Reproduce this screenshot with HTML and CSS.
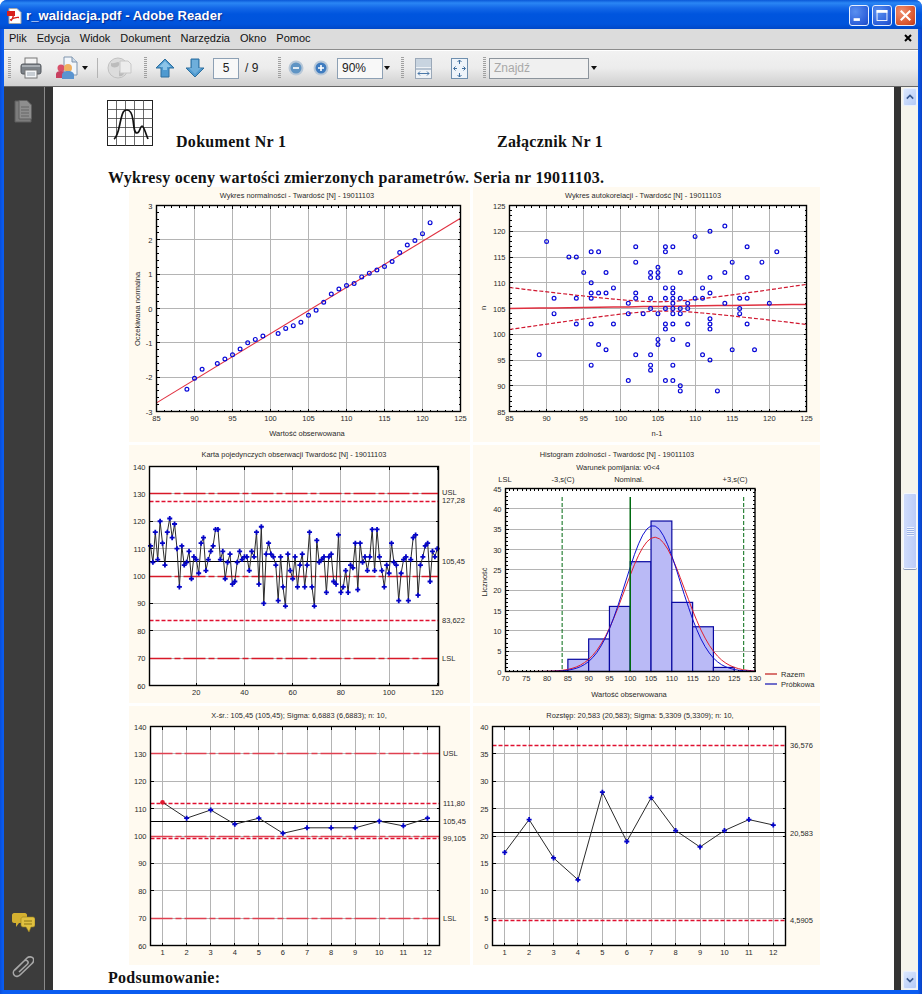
FILE: index.html
```html
<!DOCTYPE html>
<html lang="pl">
<head>
    <meta charset="UTF-8">
    <title>r_walidacja.pdf - Adobe Reader</title>
    <link rel="stylesheet" href="styles.css">
</head>
<body>
    <div class="window">
        <div class="titlebar">
            <svg class="title-icon" viewBox="0 0 15 16">
                <path d="M2 0.500h8l4 4v11H2z" fill="#fff" stroke="#a8a8a8"/>
                <path d="M0 3h8v5H0z" fill="#d8201c"/>
                <path d="M4 13c2-3 3-7 2.500-10M3 12c3-2 6-3 9-2.500" fill="none" stroke="#d8201c" stroke-width="1.300"/>
            </svg>
            <div class="title-text">r_walidacja.pdf - Adobe Reader</div>
            <div class="win-buttons">
                <div class="win-btn">
                    <svg viewBox="0 0 20 20"><rect x="4" y="13" width="7" height="3" fill="#fff"/></svg>
                </div>
                <div class="win-btn">
                    <svg viewBox="0 0 20 20"><rect x="4.500" y="4.500" width="11" height="11" fill="none" stroke="#fff"/><rect x="4" y="4" width="12" height="3" fill="#fff"/></svg>
                </div>
                <div class="win-btn win-close">
                    <svg viewBox="0 0 20 20"><path d="M5 5l10 10M15 5L5 15" stroke="#fff" stroke-width="2.200"/></svg>
                </div>
            </div>
        </div>

        <div class="inner">
            <div class="menubar">
                <span>Plik</span>
                <span>Edycja</span>
                <span>Widok</span>
                <span>Dokument</span>
                <span>Narzędzia</span>
                <span>Okno</span>
                <span>Pomoc</span>
                <svg class="menu-close" viewBox="0 0 8 8"><path d="M1 1l6 6M7 1L1 7" stroke="#000" stroke-width="2"/></svg>
            </div>

            <div class="toolbar">
                <div class="grip grip-first"></div>
                <svg class="ico ico-print" viewBox="0 0 22 22">
                    <rect x="5" y="1" width="12" height="7" fill="#f4f4f4" stroke="#777"/>
                    <rect x="1" y="7" width="20" height="10" rx="2" fill="#7c8288" stroke="#55595e"/>
                    <rect x="2" y="8" width="18" height="2" fill="#a8adb2"/>
                    <rect x="5" y="13" width="12" height="8" fill="#f4f6f8" stroke="#777"/>
                    <path d="M7 16h8M7 18h8" stroke="#9aa4ae"/>
                </svg>
                <svg class="ico ico-collab" viewBox="0 0 23 24">
                    <path d="M9 1h8l5 5v13H9z" fill="#f2f6fa" stroke="#7f94ad"/>
                    <path d="M17 1v5h5" fill="#cfdcea" stroke="#7f94ad"/>
                    <circle cx="6" cy="12" r="3.500" fill="#d8506a"/>
                    <path d="M1 22v-4c0-2 2-3 5-3s5 1 5 3v4z" fill="#c84060"/>
                    <circle cx="13" cy="12" r="4" fill="#f0b060"/>
                    <path d="M7 23v-4c0-2 2-4 6-4s6 2 6 4v4z" fill="#5a94d0"/>
                </svg>
                <div class="drop drop-collab"></div>
                <div class="tb-sep"></div>
                <svg class="ico ico-globe" viewBox="0 0 25 22">
                    <circle cx="11" cy="11" r="10" fill="#dcdcdc" stroke="#c0c0c0"/>
                    <path d="M4 6c3 1 5-1 7-1s2 4-1 5-5 0-6-1zM12 14c2-1 5 0 5 2s-3 4-5 3z" fill="#bcbcbc"/>
                    <path d="M13 4h8l3 3v9H13z" fill="#ececec" stroke="#c8c8c8"/>
                </svg>
                <div class="grip grip-nav"></div>
                <svg class="ico ico-up" viewBox="0 0 20 20">
                    <path d="M10 1l9 9h-5v9H6v-9H1z" fill="#4f9ad0" stroke="#2e6f9e"/>
                    <path d="M10 3l6 6h-4v3H8V9H4z" fill="#8cc4e8"/>
                </svg>
                <svg class="ico ico-down" viewBox="0 0 20 20">
                    <path d="M10 19l9-9h-5V1H6v9H1z" fill="#4f9ad0" stroke="#2e6f9e"/>
                    <path d="M7 2h6v8h3l-6 6-6-6h3z" fill="#6eaedb"/>
                </svg>
                <div class="tb-input page-input">5</div>
                <div class="page-total">/ 9</div>
                <div class="grip grip-zoom"></div>
                <svg class="ico ico-minus" viewBox="0 0 16 16">
                    <circle cx="8" cy="8" r="7.500" fill="#b8c8d8"/>
                    <circle cx="8" cy="8" r="5.500" fill="#5f94c4"/>
                    <path d="M5 8h6" stroke="#fff" stroke-width="1.600"/>
                </svg>
                <svg class="ico ico-plus" viewBox="0 0 16 16">
                    <circle cx="8" cy="8" r="7.500" fill="#b8c8d8"/>
                    <circle cx="8" cy="8" r="5.500" fill="#3f7cc0"/>
                    <path d="M5 8h6M8 5v6" stroke="#fff" stroke-width="1.600"/>
                </svg>
                <div class="tb-input zoom-input">90%</div>
                <div class="drop drop-zoom"></div>
                <div class="grip grip-fit"></div>
                <svg class="ico ico-fitw" viewBox="0 0 17 21">
                    <rect x="0.500" y="0.500" width="16" height="20" fill="#eef2f6" stroke="#9aa8b8"/>
                    <rect x="1" y="1" width="15" height="8" fill="#c8d4e0"/>
                    <path d="M1 11h15" stroke="#7f94ad"/>
                    <path d="M3 15.500h11M3 15.500l2-2M3 15.500l2 2M14 15.500l-2-2M14 15.500l-2 2" fill="none" stroke="#4a78a8"/>
                </svg>
                <svg class="ico ico-fitp" viewBox="0 0 17 21">
                    <rect x="0.500" y="0.500" width="16" height="20" fill="#eef4fa" stroke="#6f8fae"/>
                    <path d="M8.500 2v4M6.500 4l2-2 2 2M8.500 19v-4M6.500 17l2 2 2-2M3 10.500h3M4.500 8.500l-2 2 2 2M14 10.500h-3M12.500 8.500l2 2-2 2" fill="none" stroke="#3f6f9f"/>
                </svg>
                <div class="grip grip-find"></div>
                <div class="tb-input find-input">Znajdź</div>
                <div class="drop drop-find"></div>
            </div>

            <div class="workspace">
                <div class="navpanel">
                    <svg class="nav-pages" viewBox="0 0 18 23">
                        <path d="M1 1h11l5 5v16H1z" fill="#7c7c7c" stroke="#5c5c5c"/>
                        <path d="M5 0.500h8l4.500 4.500v14H5z" fill="#8e8e8e" stroke="#606060"/>
                        <path d="M7 7h8M7 10h8M7 13h8M7 16h8" stroke="#666"/>
                    </svg>
                    <div class="nav-bottom">
                        <svg class="nav-comments" viewBox="0 0 23 21">
                            <path d="M2 1h11c1 0 2 1 2 2v6c0 1-1 2-2 2H7l-3 4v-4H2c-1 0-2-1-2-2V3c0-1 1-2 2-2z" fill="#d4b030"/>
                            <path d="M11 5h10c1 0 2 1 2 2v6c0 1-1 2-2 2h-2l-2 5-3-5h-3c-1 0-2-1-2-2V7c0-1 1-2 2-2z" fill="#e0c040" stroke="#98801c" stroke-width="0.600"/>
                            <path d="M12 9h8M12 12h8" stroke="#8a7414"/>
                        </svg>
                        <svg class="nav-clip" viewBox="0 0 22 23">
                            <path d="M3 15L15 3c2-2 5-1 6 0s1 4-1 5.500L8 20c-1.500 1.500-4 2-5.500 .5S1 16.500 2.500 15L12 6c1-1 2.500-1 3.500 0s.5 2.500-.5 3.500L7 17" fill="none" stroke="#a8a8a8" stroke-width="1.600"/>
                        </svg>
                    </div>
                </div>
                <div class="canvas">
                    <div class="page">
                        <div class="doc-head">
                            <svg class="doc-logo" viewBox="0 0 46 46">
                                <rect x="0.500" y="0.500" width="45" height="45" fill="#fff" stroke="#222"/>
                                <path d="M9.500 0v46M18.500 0v46M27.500 0v46M36.500 0v46M0 9.500h46M0 18.500h46M0 27.500h46M0 36.500h46" stroke="#444" stroke-width="0.800"/>
                                <path d="M7 39c4-2 5-12 7-20s3-9 6-9 5 3 6 10 1 13 4 13 3-7 5-7 3 6 6 13" fill="none" stroke="#111" stroke-width="1.700"/>
                            </svg>
                            <div class="doc-no">Dokument Nr 1</div>
                            <div class="doc-no doc-att">Załącznik Nr 1</div>
                        </div>
                        <h2 class="doc-title">Wykresy oceny wartości zmierzonych parametrów. Seria nr 19011103.</h2>
                        <div class="charts">
                            <svg class="chart" id="normal" viewBox="130 188 341 255"></svg>
                            <svg class="chart" id="autocorr" viewBox="474 188 347 255"></svg>
                            <svg class="chart" id="single" viewBox="130 446 341 258"></svg>
                            <svg class="chart" id="histogram" viewBox="473 446 347 258"></svg>
                            <svg class="chart" id="xbar" viewBox="129 707 341 259"></svg>
                            <svg class="chart" id="range" viewBox="473 707 347 259"></svg>
                        </div>
                        <h3 class="doc-summary">Podsumowanie:</h3>
                    </div>
                </div>
                <div class="scrollbar">
                    <div class="sb-btn">
                        <svg viewBox="0 0 15 15"><path d="M3.500 9.500l4-4 4 4" fill="none" stroke="#3a5a90" stroke-width="2"/></svg>
                    </div>
                    <div class="sb-track">
                        <div class="sb-thumb">
                            <div class="sb-lines"></div>
                        </div>
                    </div>
                    <div class="sb-btn">
                        <svg viewBox="0 0 15 15"><path d="M3.500 5.500l4 4 4-4" fill="none" stroke="#3a5a90" stroke-width="2"/></svg>
                    </div>
                </div>
            </div>
        </div>
    </div>

    <script src="charts.js"></script>
</body>
</html>
```

FILE: styles.css
```css
html, body {
    margin: 0;
    padding: 0;
    background: #fff;
}

.window {
    width: 922px;
    height: 994px;
    display: flex;
    flex-direction: column;
    overflow: hidden;
    background: linear-gradient(90deg, #0a4ed8 0, #0a5cf0 3px, #0a5cf0 918px, #0840c4 922px);
    border-radius: 7px 7px 0 0;
    font-family: "Liberation Sans", Arial, sans-serif;
}

/* title bar */
.titlebar {
    height: 29px;
    flex: none;
    box-sizing: border-box;
    padding-top: 2px;
    display: flex;
    align-items: center;
    background: linear-gradient(180deg, #0a58d8 0, #2a86f4 3px, #1468e8 8px, #0055de 14px, #0054dc 24px, #0048c8 29px);
}

.title-icon {
    width: 15px;
    height: 16px;
    margin-left: 7px;
}

.title-text {
    margin-left: 4px;
    color: #fff;
    font-size: 13px;
    font-weight: 700;
    letter-spacing: 0.1px;
    text-shadow: 1px 1px 1px #0a2a90;
}

.win-buttons {
    margin-left: auto;
    margin-right: 6px;
    display: flex;
    gap: 3px;
}

.win-btn {
    width: 18px;
    height: 19px;
    border: 1px solid #e8f0ff;
    border-radius: 3px;
    background: radial-gradient(circle at 30% 30%, #5a90f0, #2a5cd8 75%, #1c48c0);
}

.win-btn svg {
    display: block;
    width: 100%;
    height: 100%;
}

.win-close {
    width: 19px;
    background: radial-gradient(circle at 30% 30%, #f09070, #d8542c 70%, #b83818);
}

.inner {
    flex: 1;
    min-height: 0;
    margin: 0 4px 4px;
    display: flex;
    flex-direction: column;
}

/* menu */
.menubar {
    height: 20px;
    flex: none;
    box-sizing: border-box;
    padding: 0 0 2px 5px;
    display: flex;
    align-items: center;
    gap: 10px;
    background: #dcdcdc;
    font-size: 11px;
    color: #111;
}

.menu-close {
    width: 8px;
    height: 8px;
    margin-left: auto;
    margin-right: 6px;
}

/* toolbar */
.toolbar {
    height: 38px;
    flex: none;
    box-sizing: border-box;
    display: flex;
    align-items: center;
    border-top: 1px solid #8c8c8c;
    border-bottom: 1px solid #666;
    background: linear-gradient(180deg, #f2f2f2 0, #ececec 50%, #cfcfcf 100%);
    box-shadow: inset 0 1px 0 #fff;
}

.grip {
    width: 3px;
    height: 22px;
    background: repeating-linear-gradient(180deg, #a0a0a0 0, #a0a0a0 1px, transparent 1px, transparent 2px);
}

.grip-first { margin-left: 4px; }
.grip-nav { margin-left: 12px; }
.grip-zoom { margin-left: 17px; }
.grip-fit { margin-left: 11px; }
.grip-find { margin-left: 15px; }

.ico { flex: none; display: block; }
.ico-print { width: 22px; height: 22px; margin-left: 9px; }
.ico-collab { width: 23px; height: 24px; margin-left: 13px; }
.ico-globe { width: 25px; height: 22px; margin-left: 9px; }
.ico-up { width: 20px; height: 20px; margin-left: 8px; }
.ico-down { width: 20px; height: 20px; margin-left: 10px; }
.ico-minus { width: 16px; height: 16px; margin-left: 7px; }
.ico-plus { width: 16px; height: 16px; margin-left: 9px; }
.ico-fitw { width: 17px; height: 21px; margin-left: 11px; }
.ico-fitp { width: 17px; height: 21px; margin-left: 19px; }

.tb-sep {
    width: 1px;
    height: 20px;
    margin-left: 9px;
    background: #b4b4b4;
}

.drop {
    width: 0;
    height: 0;
    border-left: 3.5px solid transparent;
    border-right: 3.5px solid transparent;
    border-top: 4px solid #111;
}

.drop-collab { margin-left: 4px; }
.drop-zoom { margin-left: 1px; }
.drop-find { margin-left: 2px; }

.tb-input {
    box-sizing: border-box;
    height: 21px;
    display: flex;
    align-items: center;
    border: 1px solid #8da0b4;
    background: #f8f8f8;
    font-size: 12px;
    color: #222;
}

.page-input {
    width: 26px;
    margin-left: 8px;
    justify-content: center;
}

.page-total {
    width: 16px;
    margin-left: 6px;
    font-size: 12px;
    color: #222;
}

.zoom-input {
    width: 46px;
    margin-left: 8px;
    padding-left: 4px;
}

.find-input {
    width: 100px;
    margin-left: 3px;
    padding-left: 4px;
    color: #a8a8a8;
    background: #f0f0f0;
    border-color: #8c949c;
}

/* main area */
.workspace {
    flex: 1;
    min-height: 0;
    display: flex;
}

.navpanel {
    width: 41px;
    flex: none;
    display: flex;
    flex-direction: column;
    justify-content: space-between;
    padding: 13px 0 12px;
    box-sizing: border-box;
    background: #3c3c3c;
    border-right: 1px solid #8a8a8a;
}

.nav-pages {
    width: 18px;
    height: 23px;
    margin-left: 10px;
}

.nav-bottom {
    display: flex;
    flex-direction: column;
    gap: 22px;
}

.nav-comments {
    width: 23px;
    height: 21px;
    margin-left: 8px;
}

.nav-clip {
    width: 22px;
    height: 23px;
    margin-left: 8px;
}

.canvas {
    flex: 1;
    min-width: 0;
    padding: 0 7px 0 8px;
    background: #333;
}

.page {
    height: 100%;
    box-sizing: border-box;
    overflow: hidden;
    padding: 13px 0 0 54px;
    background: #fff;
    font-family: "Liberation Serif", "Times New Roman", serif;
    color: #111;
}

.doc-head {
    display: flex;
    align-items: flex-end;
    height: 46px;
}

.doc-logo {
    width: 46px;
    height: 46px;
    flex: none;
}

.doc-no {
    margin: 0 0 -5px 23px;
    width: 109px;
    white-space: nowrap;
    font-size: 16px;
    font-weight: 700;
    letter-spacing: 0.3px;
}

.doc-att {
    margin-left: 212px;
}

.doc-title {
    margin: 22px 0 0 1px;
    font-size: 16px;
    line-height: 20px;
    font-weight: 700;
    white-space: nowrap;
    letter-spacing: 0.29px;
}

.charts {
    display: grid;
    grid-template-columns: 341px 347px;
    grid-template-rows: 255px 258px 259px;
    column-gap: 3px;
    row-gap: 3px;
    margin: -1px 0 0 22px;
    width: 691px;
}

.chart {
    display: block;
    width: 100%;
    height: 100%;
    background: #fffaf0;
    font-family: "Liberation Sans", Arial, sans-serif;
}

.doc-summary {
    margin: 3px 0 0 1px;
    font-size: 16px;
    line-height: 20px;
    font-weight: 700;
    letter-spacing: 0.3px;
}

/* chart parts, the svg nodes come from charts.js */
.chart text {
    font-size: 7.5px;
    fill: #2a2a2a;
}

.chart .tick-x,
.chart .label-x,
.chart .chart-title {
    text-anchor: middle;
}

.chart .tick-y {
    text-anchor: end;
}

.chart .chart-title {
    font-size: 7.4px;
}

.plot-bg {
    fill: #fff;
}

.plot-frame {
    fill: none;
    stroke: #000;
    stroke-width: 1.4;
}

.grid-line {
    stroke: #b4b4b4;
    stroke-width: 1;
    shape-rendering: crispEdges;
}

.tick-mark {
    stroke: #000;
    stroke-width: 1;
    shape-rendering: crispEdges;
}

.fit-line {
    fill: none;
    stroke: #e03040;
    stroke-width: 1.1;
}

.fit-mid {
    stroke-width: 1.5;
}

.ci-line {
    fill: none;
    stroke: #d01830;
    stroke-width: 1.2;
    stroke-dasharray: 4 2;
}

.spec-line {
    stroke: #d81828;
    stroke-width: 1.5;
    stroke-dasharray: 22 3 6 3;
}

.spec-light {
    stroke: #e04050;
}

.limit-line {
    stroke: #e01030;
    stroke-width: 1.3;
    stroke-dasharray: 4 2;
}

.mean-line {
    stroke: #000;
    stroke-width: 1.2;
}

.series-line {
    fill: none;
    stroke: #2a2a2a;
    stroke-width: 1;
}

.dot {
    fill: none;
    stroke: #0808d8;
    stroke-width: 1.2;
}

.plus {
    fill: none;
    stroke: #0404c8;
    stroke-width: 1.8;
}

.dot-out {
    fill: #e01830;
}

.bar {
    fill: #babaf6;
    stroke: #0808a0;
    stroke-width: 1.2;
}

.nominal {
    stroke: #006a10;
    stroke-width: 1.5;
}

.nominal-dash {
    stroke: #006a10;
    stroke-width: 1;
    stroke-dasharray: 4 2;
}

.curve-total {
    fill: none;
    stroke: #e02030;
    stroke-width: 1;
}

.curve-sample {
    fill: none;
    stroke: #1010d0;
    stroke-width: 1;
}

.legend-total {
    stroke: #c01818;
    stroke-width: 1.2;
}

.legend-sample {
    stroke: #1010b0;
    stroke-width: 1.2;
}

/* scrollbar */
.scrollbar {
    width: 17px;
    flex: none;
    display: flex;
    flex-direction: column;
    background: #f5f4ec;
}

.sb-btn {
    height: 16px;
    flex: none;
    margin: 1px 1px 1px 2px;
    border: 1px solid #e8f0ff;
    border-radius: 2px;
    background: linear-gradient(135deg, #dce8fe, #b4caf6);
}

.sb-btn svg {
    display: block;
    width: 100%;
    height: 100%;
}

.sb-track {
    flex: 1;
    display: flex;
    flex-direction: column;
}

.sb-thumb {
    height: 76px;
    margin: 386px 1px 0 2px;
    box-sizing: border-box;
    display: flex;
    align-items: center;
    justify-content: center;
    border: 1px solid #f4f8ff;
    border-radius: 2px;
    box-shadow: 0 1px 0 #8a9ab8;
    background: linear-gradient(90deg, #cfdcfb, #bccdf8);
}

.sb-lines {
    width: 7px;
    height: 9px;
    background: repeating-linear-gradient(180deg, #eef3ff 0, #eef3ff 1px, #9db4e6 1px, #9db4e6 2px);
}
```

FILE: charts.js
```js
// Draws the six Statistica style plots into the svg nodes of the page.
// All coordinates below are window pixels, each svg viewBox starts at its cell corner.
const NS = 'http://www.w3.org/2000/svg';

function el(parent, name, attrs, text) {
    const node = document.createElementNS(NS, name);
    for (const key in attrs) node.setAttribute(key, attrs[key]);
    if (text !== undefined) node.textContent = text;
    parent.appendChild(node);
    return node;
}

function range(from, to, step) {
    const out = [];
    for (let v = from; v <= to + 1e-9; v += step) out.push(Math.round(v * 100) / 100);
    return out;
}

function makePlot(cfg) {
    const svg = document.getElementById(cfg.id);
    const sx = v => cfg.left + (v - cfg.xMin) / (cfg.xMax - cfg.xMin) * (cfg.right - cfg.left);
    const sy = v => cfg.bottom - (v - cfg.yMin) / (cfg.yMax - cfg.yMin) * (cfg.bottom - cfg.top);

    el(svg, 'rect', { class: 'plot-bg', x: cfg.left, y: cfg.top, width: cfg.right - cfg.left, height: cfg.bottom - cfg.top });

    const xGrid = cfg.xGrid || cfg.xTicks;
    xGrid.forEach(v => el(svg, 'line', { class: 'grid-line', x1: sx(v), x2: sx(v), y1: cfg.top, y2: cfg.bottom }));
    cfg.yTicks.forEach(v => el(svg, 'line', { class: 'grid-line', x1: cfg.left, x2: cfg.right, y1: sy(v), y2: sy(v) }));

    function tickX(v, len) {
        el(svg, 'line', { class: 'tick-mark', x1: sx(v), x2: sx(v), y1: cfg.bottom, y2: cfg.bottom - len });
        el(svg, 'line', { class: 'tick-mark', x1: sx(v), x2: sx(v), y1: cfg.top, y2: cfg.top + len });
    }
    function tickY(v, len) {
        el(svg, 'line', { class: 'tick-mark', x1: cfg.left, x2: cfg.left + len, y1: sy(v), y2: sy(v) });
        el(svg, 'line', { class: 'tick-mark', x1: cfg.right, x2: cfg.right - len, y1: sy(v), y2: sy(v) });
    }
    xGrid.forEach(v => tickX(v, 3));
    cfg.yTicks.forEach(v => tickY(v, 3));
    (cfg.xMinor || []).forEach(v => tickX(v, 2));
    (cfg.yMinor || []).forEach(v => tickY(v, 2));

    cfg.xTicks.forEach(v => el(svg, 'text', { class: 'tick-x', x: sx(v), y: cfg.bottom + 9 }, v));
    cfg.yTicks.forEach(v => el(svg, 'text', { class: 'tick-y', x: cfg.left - 4, y: sy(v) + 3 }, v));

    cfg.titles.forEach(t => el(svg, 'text', { class: 'chart-title', x: t[0], y: t[1] }, t[2]));
    if (cfg.xLabel) el(svg, 'text', { class: 'label-x', x: cfg.xLabel[0], y: cfg.xLabel[1] }, cfg.xLabel[2]);
    if (cfg.yLabel) {
        const [x, y, text] = cfg.yLabel;
        el(svg, 'text', { class: 'label-x', x: x, y: y, transform: `rotate(-90 ${x} ${y})` }, text);
    }
    return { svg, sx, sy };
}

function frame(p, cfg) {
    el(p.svg, 'rect', { class: 'plot-frame', x: cfg.left, y: cfg.top, width: cfg.right - cfg.left, height: cfg.bottom - cfg.top });
}

function hline(p, cfg, value, cls) {
    const y = Math.floor(p.sy(value)) + 0.5;
    el(p.svg, 'line', { class: cls, x1: cfg.left, x2: cfg.right, y1: y, y2: y });
}

function polyline(p, points, cls) {
    const d = points.map(pt => `${p.sx(pt[0]).toFixed(1)},${p.sy(pt[1]).toFixed(1)}`).join(' ');
    el(p.svg, 'polyline', { class: cls, points: d });
}

function plusMark(p, x, y) {
    const cx = p.sx(x), cy = p.sy(y);
    el(p.svg, 'path', { class: 'plus', d: `M${cx - 2.5} ${cy}h5M${cx} ${cy - 2.5}v5` });
}

function sideLabels(p, x, labels) {
    labels.forEach(l => el(p.svg, 'text', { x: x, y: l[0] + 3 }, l[1]));
}

// Wykres normalnosci
const normalCfg = {
    id: 'normal', left: 157.5, right: 461.5, top: 206.5, bottom: 412.5,
    xMin: 85, xMax: 125, yMin: -3, yMax: 3,
    xTicks: range(85, 125, 5), yTicks: range(-3, 3, 1),
    xMinor: range(85, 125, 1), yMinor: range(-3, 3, 0.2),
    titles: [[298, 198.5, 'Wykres normalności - Twardość [N] - 19011103']],
    xLabel: [308, 437, 'Wartość obserwowana'],
    yLabel: [141, 310, 'Oczekiwana normalna']
};
const normalPlot = makePlot(normalCfg);
polyline(normalPlot, [[85, -2.75], [125, 2.63]], 'fit-line');
[[89, -2.35], [90, -2.03], [91, -1.77], [93, -1.6], [94, -1.47], [95, -1.35], [96, -1.18], [97, -1], [98, -0.9], [99, -0.8],
 [101, -0.73], [102, -0.58], [103, -0.5], [104, -0.4], [105, -0.2], [106, -0.05], [107, 0.18], [108, 0.42], [109, 0.57], [110, 0.67],
 [111, 0.73], [112, 0.92], [113, 1.03], [114, 1.12], [115, 1.22], [116, 1.37], [117, 1.63], [118, 1.85], [119, 1.98], [120, 2.18], [121, 2.5]
].forEach(pt => el(normalPlot.svg, 'circle', { class: 'dot', cx: normalPlot.sx(pt[0]), cy: normalPlot.sy(pt[1]), r: 1.9 }));
frame(normalPlot, normalCfg);

// Wykres autokorelacji
const autoCfg = {
    id: 'autocorr', left: 510.5, right: 807.5, top: 206.5, bottom: 412.5,
    xMin: 85, xMax: 125, yMin: 85, yMax: 125,
    xTicks: range(85, 125, 5), yTicks: range(85, 125, 5),
    xMinor: range(85, 125, 1), yMinor: range(85, 125, 1),
    titles: [[644, 198.5, 'Wykres autokorelacji - Twardość [N] - 19011103']],
    xLabel: [658, 437, 'n-1'],
    yLabel: [487, 309, 'n']
};
const autoPlot = makePlot(autoCfg);
const autoPoints = {
    121: [114], 120: [112], 119: [110], 118: [90], 117: [102, 106, 107, 117], 116: [96, 106, 97, 121], 115: [93, 94],
    114: [102, 115, 119], 113: [105], 112: [95, 98, 104, 105, 108, 114], 111: [104, 105, 112, 117], 110: [96],
    109: [99, 106, 107, 111], 108: [96, 97, 98, 102, 107, 112],
    107: [91, 94, 96, 102, 104, 106, 107, 108, 110, 111, 116, 117], 106: [101, 107, 109, 114, 120],
    105: [104, 106, 107, 108, 109, 116], 104: [91, 101, 103, 105, 107, 108, 116], 103: [112],
    102: [94, 96, 99, 106, 107, 109, 112, 117], 101: [106, 112], 99: [105, 107], 98: [97, 105, 109], 97: [98, 115, 118],
    96: [89, 102, 104, 111], 95: [112], 94: [96, 104, 107], 93: [104], 91: [101, 106, 107], 90: [108], 89: [108, 113]
};
const ciUpper = [], ciLower = [], ciMid = [];
range(85, 125, 2).forEach(x => {
    const mid = 105 + (x - 85) * 0.02;
    const half = Math.sqrt(0.8 + Math.pow((x - 105.5) / 20, 2) * 15);
    ciMid.push([x, mid]);
    ciUpper.push([x, mid + half]);
    ciLower.push([x, mid - half]);
});
polyline(autoPlot, ciMid, 'fit-line fit-mid');
polyline(autoPlot, ciUpper, 'ci-line');
polyline(autoPlot, ciLower, 'ci-line');
Object.keys(autoPoints).forEach(y => {
    autoPoints[y].forEach(x => el(autoPlot.svg, 'circle', { class: 'dot', cx: autoPlot.sx(x), cy: autoPlot.sy(+y), r: 1.9 }));
});
frame(autoPlot, autoCfg);

// Karta pojedynczych obserwacji
const singleCfg = {
    id: 'single', left: 150.5, right: 439.5, top: 467.5, bottom: 686.5,
    xMin: 0.6, xMax: 120.5, yMin: 60, yMax: 140,
    xTicks: range(20, 120, 20), yTicks: range(60, 140, 10),
    titles: [[295, 458, 'Karta pojedynczych obserwacji Twardość [N] - 19011103']]
};
const singlePlot = makePlot(singleCfg);
hline(singlePlot, singleCfg, 130, 'spec-line');
hline(singlePlot, singleCfg, 127.28, 'limit-line');
hline(singlePlot, singleCfg, 100, 'spec-line');
hline(singlePlot, singleCfg, 83.622, 'limit-line');
hline(singlePlot, singleCfg, 70, 'spec-line');
hline(singlePlot, singleCfg, 105.45, 'mean-line');
const singleData = [111, 105, 116, 106, 120, 112, 104, 116, 121, 114, 119, 110, 96, 111, 104, 105, 109, 99, 107, 106,
    101, 112, 114, 102, 106, 109, 111, 117, 117, 106, 109, 99, 105, 108, 97, 98, 105, 109, 106, 107,
    107, 102, 109, 107, 116, 97, 118, 90, 108, 112, 108, 107, 104, 91, 107, 96, 89, 108, 102, 99,
    107, 96, 104, 108, 96, 104, 116, 96, 89, 113, 105, 106, 107, 94, 107, 108, 98, 97, 115, 94,
    96, 102, 94, 104, 103, 112, 95, 112, 105, 107, 102, 107, 117, 102, 117, 107, 102, 96, 104, 101,
    112, 105, 104, 91, 101, 106, 107, 91, 106, 114, 115, 93, 104, 107, 111, 112, 98, 109, 107, 110];
polyline(singlePlot, singleData.map((v, i) => [i + 1, v]), 'series-line');
singleData.forEach((v, i) => plusMark(singlePlot, i + 1, v));
frame(singlePlot, singleCfg);
sideLabels(singlePlot, 443, [[493, 'USL'], [501, '127,28'], [562, '105,45'], [621, '83,622'], [659, 'LSL']]);

// Histogram zdolnosci
const histCfg = {
    id: 'histogram', left: 505.5, right: 755, top: 489.5, bottom: 672.5,
    xMin: 70, xMax: 130, yMin: 0, yMax: 45,
    xTicks: range(70, 130, 5), yTicks: range(0, 45, 5),
    xGrid: [], xMinor: range(70, 130, 1), yMinor: range(0, 45, 1),
    titles: [[617, 458, 'Histogram zdolności - Twardość [N] - 19011103'], [618, 471, 'Warunek pomijania: v0<4']],
    xLabel: [629, 698, 'Wartość obserwowana'],
    yLabel: [487, 583, 'Liczność']
};
const histPlot = makePlot(histCfg);
const bars = [[85, 3], [90, 8], [95, 16], [100, 27], [105, 37], [110, 17], [115, 11], [120, 1]];
bars.forEach(b => {
    const x = histPlot.sx(b[0]);
    const top = histPlot.sy(b[1]);
    el(histPlot.svg, 'rect', { class: 'bar', x: x, y: top, width: histPlot.sx(b[0] + 5) - x, height: histCfg.bottom - top });
});
function bell(mean, sigma) {
    return range(70, 130, 1).map(x => {
        const z = (x - mean) / sigma;
        return [x, 600 / (sigma * Math.sqrt(2 * Math.PI)) * Math.exp(-z * z / 2)];
    });
}
polyline(histPlot, bell(105.9, 7.25), 'curve-total');
polyline(histPlot, bell(105.45, 6.67), 'curve-sample');
[[83.62, 'nominal-dash'], [100, 'nominal'], [127.28, 'nominal-dash']].forEach(l => {
    const x = histPlot.sx(l[0]);
    el(histPlot.svg, 'line', { class: l[1], x1: x, x2: x, y1: 498, y2: histCfg.bottom });
});
frame(histPlot, histCfg);
[[505, 'LSL'], [563, '-3,s(C)'], [629, 'Nominal.'], [735, '+3,s(C)']].forEach(l => {
    el(histPlot.svg, 'text', { class: 'tick-x', x: l[0], y: 483 }, l[1]);
});
el(histPlot.svg, 'line', { class: 'legend-total', x1: 765, x2: 777, y1: 675, y2: 675 });
el(histPlot.svg, 'line', { class: 'legend-sample', x1: 765, x2: 777, y1: 685, y2: 685 });
el(histPlot.svg, 'text', { x: 781, y: 678 }, 'Razem');
el(histPlot.svg, 'text', { x: 781, y: 688 }, 'Próbkowa');

// Karta X-sr.
const xbarCfg = {
    id: 'xbar', left: 150.5, right: 439.5, top: 727.5, bottom: 946.5,
    xMin: 0.5, xMax: 12.5, yMin: 60, yMax: 140,
    xTicks: range(1, 12, 1), yTicks: range(60, 140, 10),
    titles: [[299, 719, 'X-śr.: 105,45 (105,45); Sigma: 6,6883 (6,6883); n: 10,']]
};
const xbarPlot = makePlot(xbarCfg);
[130, 100, 70].forEach(v => hline(xbarPlot, xbarCfg, v, 'spec-line spec-light'));
hline(xbarPlot, xbarCfg, 111.8, 'limit-line');
hline(xbarPlot, xbarCfg, 99.105, 'limit-line');
hline(xbarPlot, xbarCfg, 105.45, 'mean-line');
const xbarData = [112.3, 106.5, 109.5, 104.3, 106.5, 101, 103, 103, 103, 105.4, 103.7, 106.5];
polyline(xbarPlot, xbarData.map((v, i) => [i + 1, v]), 'series-line');
xbarData.forEach((v, i) => {
    if (i === 0) el(xbarPlot.svg, 'circle', { class: 'dot-out', cx: xbarPlot.sx(1), cy: xbarPlot.sy(v), r: 2.3 });
    else plusMark(xbarPlot, i + 1, v);
});
frame(xbarPlot, xbarCfg);
sideLabels(xbarPlot, 443, [[754, 'USL'], [804, '111,80'], [822, '105,45'], [839, '99,105'], [919, 'LSL']]);

// Karta rozstepu
const rangeCfg = {
    id: 'range', left: 492.5, right: 785.5, top: 727.5, bottom: 946.5,
    xMin: 0.5, xMax: 12.5, yMin: 0, yMax: 40,
    xTicks: range(1, 12, 1), yTicks: range(0, 40, 5),
    titles: [[640, 719, 'Rozstęp: 20,583 (20,583); Sigma: 5,3309 (5,3309); n: 10,']]
};
const rangePlot = makePlot(rangeCfg);
hline(rangePlot, rangeCfg, 36.576, 'limit-line');
hline(rangePlot, rangeCfg, 4.5905, 'limit-line');
hline(rangePlot, rangeCfg, 20.583, 'mean-line');
const rangeData = [17, 23, 16, 12, 28, 19, 27, 21, 18, 21, 23, 22];
polyline(rangePlot, rangeData.map((v, i) => [i + 1, v]), 'series-line');
rangeData.forEach((v, i) => plusMark(rangePlot, i + 1, v));
frame(rangePlot, rangeCfg);
sideLabels(rangePlot, 790, [[746, '36,576'], [834, '20,583'], [921, '4,5905']]);
```
